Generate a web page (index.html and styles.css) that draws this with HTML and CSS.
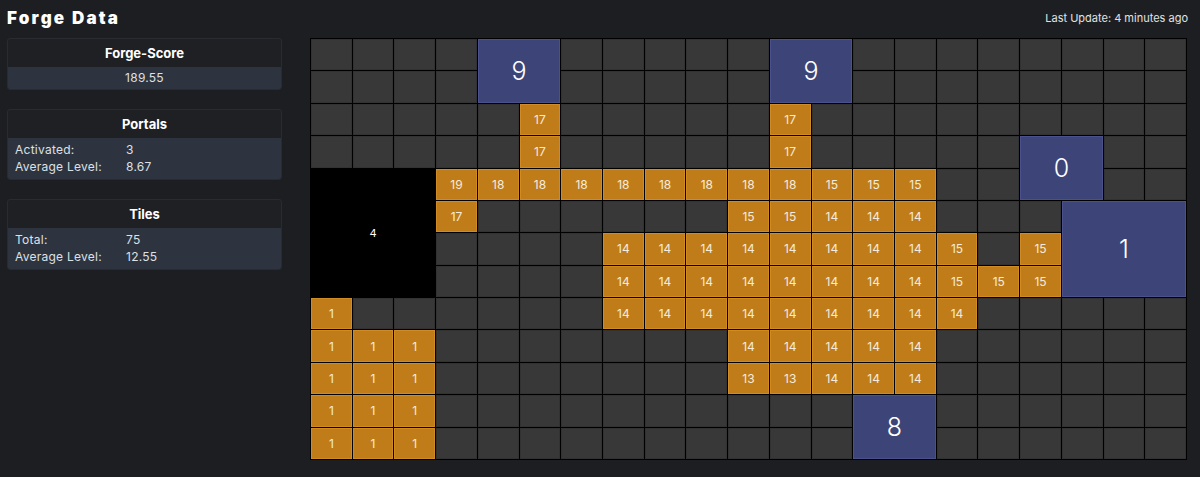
FILE: index.html
```html
<!DOCTYPE html>
<html lang="en">
<head>
<meta charset="utf-8">
<title>Forge Data</title>
<link rel="stylesheet" href="styles.css">
</head>
<body>
<div class="page">
  <header class="topbar">
    <h1 class="title">Forge Data</h1>
    <div class="updated">Last Update: 4 minutes ago</div>
  </header>
  <main class="main">
    <aside class="side">
      <section class="card">
        <div class="card-head">Forge-Score</div>
        <div class="card-body single">189.55</div>
      </section>
      <section class="card">
        <div class="card-head">Portals</div>
        <div class="card-body">
          <div class="kv"><span>Activated:</span><span>3</span></div>
          <div class="kv"><span>Average Level:</span><span>8.67</span></div>
        </div>
      </section>
      <section class="card">
        <div class="card-head">Tiles</div>
        <div class="card-body">
          <div class="kv"><span>Total:</span><span>75</span></div>
          <div class="kv"><span>Average Level:</span><span>12.55</span></div>
        </div>
      </section>
    </aside>
    <div class="board">
      <div class="cell portal" style="grid-area: 1 / 5 / 3 / 7">9</div>
      <div class="cell portal" style="grid-area: 1 / 12 / 3 / 14">9</div>
      <div class="cell portal" style="grid-area: 4 / 18 / 6 / 20">0</div>
      <div class="cell portal" style="grid-area: 6 / 19 / 9 / 22">1</div>
      <div class="cell portal" style="grid-area: 12 / 14 / 14 / 16">8</div>
      <div class="cell void" style="grid-area: 5 / 1 / 9 / 4">4</div>
      <!-- row 1 -->
      <div class="cell"></div><div class="cell"></div><div class="cell"></div><div class="cell"></div>
      <div class="cell"></div><div class="cell"></div><div class="cell"></div><div class="cell"></div><div class="cell"></div>
      <div class="cell"></div><div class="cell"></div><div class="cell"></div><div class="cell"></div><div class="cell"></div><div class="cell"></div><div class="cell"></div><div class="cell"></div>
      <!-- row 2 -->
      <div class="cell"></div><div class="cell"></div><div class="cell"></div><div class="cell"></div>
      <div class="cell"></div><div class="cell"></div><div class="cell"></div><div class="cell"></div><div class="cell"></div>
      <div class="cell"></div><div class="cell"></div><div class="cell"></div><div class="cell"></div><div class="cell"></div><div class="cell"></div><div class="cell"></div><div class="cell"></div>
      <!-- row 3 -->
      <div class="cell"></div><div class="cell"></div><div class="cell"></div><div class="cell"></div><div class="cell"></div>
      <div class="cell tile">17</div>
      <div class="cell"></div><div class="cell"></div><div class="cell"></div><div class="cell"></div><div class="cell"></div>
      <div class="cell tile">17</div>
      <div class="cell"></div><div class="cell"></div><div class="cell"></div><div class="cell"></div><div class="cell"></div><div class="cell"></div><div class="cell"></div><div class="cell"></div><div class="cell"></div>
      <!-- row 4 -->
      <div class="cell"></div><div class="cell"></div><div class="cell"></div><div class="cell"></div><div class="cell"></div>
      <div class="cell tile">17</div>
      <div class="cell"></div><div class="cell"></div><div class="cell"></div><div class="cell"></div><div class="cell"></div>
      <div class="cell tile">17</div>
      <div class="cell"></div><div class="cell"></div><div class="cell"></div><div class="cell"></div><div class="cell"></div>
      <div class="cell"></div><div class="cell"></div>
      <!-- row 5 -->
      <div class="cell tile">19</div>
      <div class="cell tile">18</div><div class="cell tile">18</div><div class="cell tile">18</div><div class="cell tile">18</div>
      <div class="cell tile">18</div><div class="cell tile">18</div><div class="cell tile">18</div><div class="cell tile">18</div>
      <div class="cell tile">15</div><div class="cell tile">15</div><div class="cell tile">15</div>
      <div class="cell"></div><div class="cell"></div>
      <div class="cell"></div><div class="cell"></div>
      <!-- row 6 -->
      <div class="cell tile">17</div>
      <div class="cell"></div><div class="cell"></div><div class="cell"></div><div class="cell"></div><div class="cell"></div><div class="cell"></div>
      <div class="cell tile">15</div><div class="cell tile">15</div>
      <div class="cell tile">14</div><div class="cell tile">14</div><div class="cell tile">14</div>
      <div class="cell"></div><div class="cell"></div><div class="cell"></div>
      <!-- row 7 -->
      <div class="cell"></div><div class="cell"></div><div class="cell"></div><div class="cell"></div>
      <div class="cell tile">14</div><div class="cell tile">14</div><div class="cell tile">14</div><div class="cell tile">14</div>
      <div class="cell tile">14</div><div class="cell tile">14</div><div class="cell tile">14</div><div class="cell tile">14</div>
      <div class="cell tile">15</div>
      <div class="cell"></div>
      <div class="cell tile">15</div>
      <!-- row 8 -->
      <div class="cell"></div><div class="cell"></div><div class="cell"></div><div class="cell"></div>
      <div class="cell tile">14</div><div class="cell tile">14</div><div class="cell tile">14</div><div class="cell tile">14</div>
      <div class="cell tile">14</div><div class="cell tile">14</div><div class="cell tile">14</div><div class="cell tile">14</div>
      <div class="cell tile">15</div><div class="cell tile">15</div><div class="cell tile">15</div>
      <!-- row 9 -->
      <div class="cell tile">1</div>
      <div class="cell"></div><div class="cell"></div><div class="cell"></div><div class="cell"></div><div class="cell"></div><div class="cell"></div>
      <div class="cell tile">14</div><div class="cell tile">14</div><div class="cell tile">14</div><div class="cell tile">14</div><div class="cell tile">14</div>
      <div class="cell tile">14</div><div class="cell tile">14</div><div class="cell tile">14</div><div class="cell tile">14</div>
      <div class="cell"></div><div class="cell"></div><div class="cell"></div><div class="cell"></div><div class="cell"></div>
      <!-- row 10 -->
      <div class="cell tile">1</div><div class="cell tile">1</div><div class="cell tile">1</div>
      <div class="cell"></div><div class="cell"></div><div class="cell"></div><div class="cell"></div><div class="cell"></div><div class="cell"></div><div class="cell"></div>
      <div class="cell tile">14</div><div class="cell tile">14</div><div class="cell tile">14</div><div class="cell tile">14</div><div class="cell tile">14</div>
      <div class="cell"></div><div class="cell"></div><div class="cell"></div><div class="cell"></div><div class="cell"></div><div class="cell"></div>
      <!-- row 11 -->
      <div class="cell tile">1</div><div class="cell tile">1</div><div class="cell tile">1</div>
      <div class="cell"></div><div class="cell"></div><div class="cell"></div><div class="cell"></div><div class="cell"></div><div class="cell"></div><div class="cell"></div>
      <div class="cell tile">13</div><div class="cell tile">13</div><div class="cell tile">14</div><div class="cell tile">14</div><div class="cell tile">14</div>
      <div class="cell"></div><div class="cell"></div><div class="cell"></div><div class="cell"></div><div class="cell"></div><div class="cell"></div>
      <!-- row 12 -->
      <div class="cell tile">1</div><div class="cell tile">1</div><div class="cell tile">1</div>
      <div class="cell"></div><div class="cell"></div><div class="cell"></div><div class="cell"></div><div class="cell"></div>
      <div class="cell"></div><div class="cell"></div><div class="cell"></div><div class="cell"></div><div class="cell"></div>
      <div class="cell"></div><div class="cell"></div><div class="cell"></div><div class="cell"></div><div class="cell"></div><div class="cell"></div>
      <!-- row 13 -->
      <div class="cell tile">1</div><div class="cell tile">1</div><div class="cell tile">1</div>
      <div class="cell"></div><div class="cell"></div><div class="cell"></div><div class="cell"></div><div class="cell"></div>
      <div class="cell"></div><div class="cell"></div><div class="cell"></div><div class="cell"></div><div class="cell"></div>
      <div class="cell"></div><div class="cell"></div><div class="cell"></div><div class="cell"></div><div class="cell"></div><div class="cell"></div>
    </div>
  </main>
</div>
</body>
</html>
```

FILE: styles.css
```css
* { box-sizing: border-box; }

html, body {
  margin: 0;
  background: #1d1e21;
}

body {
  font-family: Inter, "Open Sans", "Liberation Sans", sans-serif;
  color: #e6e6e6;
}

.page {
  padding: 0 12px 0 7px;
}

.topbar {
  height: 38px;
  display: flex;
  align-items: center;
  justify-content: space-between;
}

.title {
  margin: 0;
  font-size: 17px;
  font-weight: 900;
  letter-spacing: 2.2px;
  color: #ffffff;
  line-height: 1;
  transform: translateY(-1px);
}

.updated {
  font-size: 11px;
  color: #e2e2e2;
  transform: translateY(-1px);
}

.main {
  display: flex;
  gap: 28px;
  align-items: flex-start;
}

.side {
  width: 275px;
  flex: none;
  display: flex;
  flex-direction: column;
  gap: 19px;
}

.card {
  border: 1px solid #2a2b30;
  border-radius: 3px;
  background: #1f2024;
  overflow: hidden;
}

.card-head {
  height: 28px;
  line-height: 28px;
  text-align: center;
  font-size: 13px;
  font-weight: 700;
  color: #ffffff;
}

.card-body {
  background: #2e343f;
  padding: 3px 7px 4px;
  font-size: 12px;
  color: #dde0e5;
  letter-spacing: 0.25px;
}

.card-body.single {
  text-align: center;
  padding: 4px 7px 4px;
  line-height: 14px;
}

.kv {
  display: grid;
  grid-template-columns: 111px 1fr;
  line-height: 17px;
}

.board {
  width: 877px;
  height: 422px;
  flex: none;
  background: #000;
  padding: 1px;
  display: grid;
  grid-template-columns: repeat(21, 1fr);
  grid-template-rows: repeat(13, 1fr);
  gap: 1px;
}

.cell {
  background: #383838;
  border: 1px solid #323232;
  display: flex;
  align-items: center;
  justify-content: center;
  font-size: 12px;
  color: #f3ecdf;
  min-width: 0;
  min-height: 0;
}

.tile {
  background: #c17c1a;
  border-color: #d08b24;
}

.portal {
  background: #3d4477;
  border-color: #4a518d;
  font-size: 25px;
  font-weight: 300;
  color: #ffffff;
}

.void {
  background: #000;
  border-color: #000;
  color: #ffffff;
  font-size: 11px;
}
```
